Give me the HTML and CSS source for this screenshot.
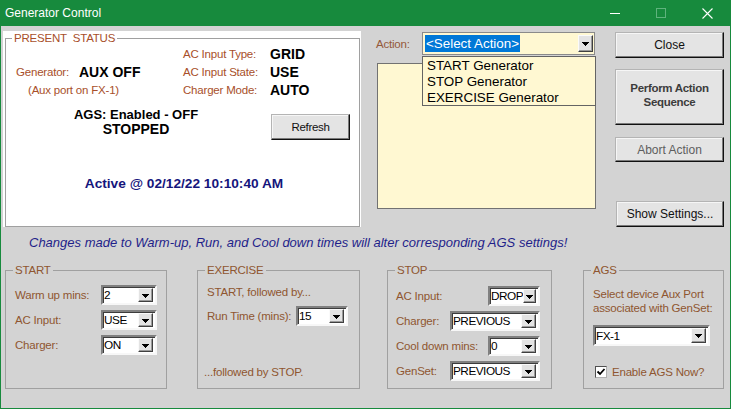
FILE: index.html
```html
<!DOCTYPE html>
<html>
<head>
<meta charset="utf-8">
<title>Generator Control</title>
<link rel="stylesheet" href="styles.css">
</head>
<body>
<div class="window">
  <header class="titlebar">
    <span class="title">Generator Control</span>
    <div class="wincontrols">
      <span class="wc"><svg width="10" height="10" viewBox="0 0 10 10"><path d="M0 5.5H10" stroke="#fff" stroke-width="1"/></svg></span>
      <span class="wc"><svg width="10" height="10" viewBox="0 0 10 10"><rect x="0.5" y="0.5" width="9" height="9" fill="none" stroke="#5fb37d" stroke-width="1"/></svg></span>
      <span class="wc"><svg width="11" height="11" viewBox="0 0 11 11"><path d="M0.5 0.5L10.5 10.5M10.5 0.5L0.5 10.5" stroke="#fff" stroke-width="1.1"/></svg></span>
    </div>
  </header>
  <main class="client">
    <section class="top">
      <div class="status-panel">
        <fieldset class="status-group">
          <legend>PRESENT  STATUS</legend>
          <div class="status-grid">
            <div class="cell-left"></div>
            <span class="slabel">AC Input Type:</span>
            <span class="sval">GRID</span>
            <div class="cell-left gen"><span class="slabel">Generator:</span><span class="sval">AUX OFF</span></div>
            <span class="slabel">AC Input State:</span>
            <span class="sval">USE</span>
            <div class="cell-left aux"><span class="slabel">(Aux port on FX-1)</span></div>
            <span class="slabel">Charger Mode:</span>
            <span class="sval">AUTO</span>
          </div>
          <div class="ags-row">
            <div class="ags-state">
              <div class="ags-line1">AGS: Enabled - OFF</div>
              <div class="ags-line2">STOPPED</div>
            </div>
            <button class="btn refresh">Refresh</button>
          </div>
          <div class="active">Active @ 02/12/22 10:10:40 AM</div>
        </fieldset>
      </div>
      <div class="action-col">
        <div class="action-row">
          <span class="action-label">Action:</span>
          <div class="action-combo">
            <span class="sel">&lt;Select Action&gt;</span>
            <span class="combo-btn abtn"><svg class="arrow" width="7" height="4" viewBox="0 0 7 4"><path d="M0 0h7v1H0zM1 1h5v1H1zM2 2h3v1H2zM3 3h1v1H3z"/></svg></span>
            <ul class="droplist">
              <li>START Generator</li>
              <li>STOP Generator</li>
              <li>EXERCISE Generator</li>
            </ul>
          </div>
        </div>
        <div class="action-box"></div>
      </div>
      <div class="btn-col">
        <button class="btn btn-close">Close</button>
        <button class="btn btn-perform">Perform Action<br>Sequence</button>
        <button class="btn btn-abort">Abort Action</button>
        <button class="btn btn-show">Show Settings...</button>
      </div>
    </section>
    <p class="note">Changes made to Warm-up, Run, and Cool down times will alter corresponding AGS settings!</p>
    <section class="groups">
      <fieldset class="group g-start">
        <legend>START</legend>
        <div class="gbody start-grid">
          <span class="glabel">Warm up mins:</span>
          <div class="combo w56"><span class="combo-text">2</span><span class="combo-btn"><svg class="arrow" width="7" height="4" viewBox="0 0 7 4"><path d="M0 0h7v1H0zM1 1h5v1H1zM2 2h3v1H2zM3 3h1v1H3z"/></svg></span></div>
          <span class="glabel">AC Input:</span>
          <div class="combo w56"><span class="combo-text">USE</span><span class="combo-btn"><svg class="arrow" width="7" height="4" viewBox="0 0 7 4"><path d="M0 0h7v1H0zM1 1h5v1H1zM2 2h3v1H2zM3 3h1v1H3z"/></svg></span></div>
          <span class="glabel">Charger:</span>
          <div class="combo w56"><span class="combo-text">ON</span><span class="combo-btn"><svg class="arrow" width="7" height="4" viewBox="0 0 7 4"><path d="M0 0h7v1H0zM1 1h5v1H1zM2 2h3v1H2zM3 3h1v1H3z"/></svg></span></div>
        </div>
      </fieldset>
      <fieldset class="group g-ex">
        <legend>EXERCISE</legend>
        <div class="gbody ex-body">
          <div class="ex-line1 glabel">START, followed by...</div>
          <div class="ex-run">
            <span class="glabel ex-run-label">Run Time (mins):</span>
            <div class="combo w52"><span class="combo-text">15</span><span class="combo-btn"><svg class="arrow" width="7" height="4" viewBox="0 0 7 4"><path d="M0 0h7v1H0zM1 1h5v1H1zM2 2h3v1H2zM3 3h1v1H3z"/></svg></span></div>
          </div>
          <div class="ex-end glabel">...followed by STOP.</div>
        </div>
      </fieldset>
      <fieldset class="group g-stop">
        <legend>STOP</legend>
        <div class="gbody stop-body">
          <div class="stop-row">
            <span class="glabel">AC Input:</span>
            <div class="combo w52"><span class="combo-text">DROP</span><span class="combo-btn"><svg class="arrow" width="7" height="4" viewBox="0 0 7 4"><path d="M0 0h7v1H0zM1 1h5v1H1zM2 2h3v1H2zM3 3h1v1H3z"/></svg></span></div>
          </div>
          <div class="stop-row">
            <span class="glabel">Charger:</span>
            <div class="combo w90"><span class="combo-text">PREVIOUS</span><span class="combo-btn"><svg class="arrow" width="7" height="4" viewBox="0 0 7 4"><path d="M0 0h7v1H0zM1 1h5v1H1zM2 2h3v1H2zM3 3h1v1H3z"/></svg></span></div>
          </div>
          <div class="stop-row">
            <span class="glabel">Cool down mins:</span>
            <div class="combo w52"><span class="combo-text">0</span><span class="combo-btn"><svg class="arrow" width="7" height="4" viewBox="0 0 7 4"><path d="M0 0h7v1H0zM1 1h5v1H1zM2 2h3v1H2zM3 3h1v1H3z"/></svg></span></div>
          </div>
          <div class="stop-row">
            <span class="glabel">GenSet:</span>
            <div class="combo w90"><span class="combo-text">PREVIOUS</span><span class="combo-btn"><svg class="arrow" width="7" height="4" viewBox="0 0 7 4"><path d="M0 0h7v1H0zM1 1h5v1H1zM2 2h3v1H2zM3 3h1v1H3z"/></svg></span></div>
          </div>
        </div>
      </fieldset>
      <fieldset class="group g-ags">
        <legend>AGS</legend>
        <div class="gbody ags-body">
          <div class="glabel ags-text">Select device Aux Port<br>associated with GenSet:</div>
          <div class="combo w117 h21"><span class="combo-text">FX-1</span><span class="combo-btn"><svg class="arrow" width="7" height="4" viewBox="0 0 7 4"><path d="M0 0h7v1H0zM1 1h5v1H1zM2 2h3v1H2zM3 3h1v1H3z"/></svg></span></div>
          <label class="check-row">
            <span class="checkbox"><svg width="10" height="10" viewBox="0 0 10 10"><path d="M1.5 4.5L4 7L8.5 2" fill="none" stroke="#000" stroke-width="1.8"/></svg></span>
            <span class="glabel">Enable AGS Now?</span>
          </label>
        </div>
      </fieldset>
    </section>
  </main>
</div>
</body>
</html>
```

FILE: styles.css
```css
* { box-sizing: border-box; }
html, body { margin: 0; padding: 0; }
body {
  width: 731px;
  height: 409px;
  overflow: hidden;
  background: #d3d3d3;
  font-family: "Liberation Sans", Arial, sans-serif;
  font-size: 11.5px;
  letter-spacing: -0.2px;
  color: #000;
}

/* buttons (base) */
.btn {
  font-family: inherit;
  font-size: 12px;
  letter-spacing: 0;
  color: #111;
  background: #e4e4e4;
  border: 1px solid;
  border-color: #b4b4b4 #101010 #101010 #b4b4b4;
  box-shadow: inset -1px -1px 0 #7a7a7a, inset 1px 1px 0 #f6f6f6;
  padding: 0;
  margin: 0;
}

.window {
  width: 731px;
  height: 409px;
  display: flex;
  flex-direction: column;
  border: 1px solid #178a3d;
  border-top: none;
  background: #d3d3d3;
}
.titlebar {
  height: 26px;
  flex: none;
  background: #178a3d;
  display: flex;
  align-items: center;
  padding-left: 4px;
  color: #fff;
}
.title { font-size: 12px; letter-spacing: 0; }
.wincontrols { margin-left: auto; display: flex; height: 100%; }
.wc { width: 46px; display: flex; align-items: center; justify-content: center; }

.client { flex: 1; display: flex; flex-direction: column; }
.top { display: flex; align-items: flex-start; }

/* present status */
.status-panel {
  margin: 5px 0 0 2px;
  width: 358px;
  height: 196px;
  background: #fff;
  padding: 0 1px 0 2px;
}
fieldset { margin: 0; padding: 0; min-width: 0; border: 1px solid #a0a0a0; }
legend { padding: 0 2px; line-height: 14px; white-space: pre; }
.status-group { height: 196px; }
.status-group legend { margin-left: 6px; color: #a84f2a; }
.status-grid {
  display: grid;
  grid-template-columns: 177px 87px 1fr;
  grid-auto-rows: 18px;
  align-items: center;
}
.slabel { color: #a84f2a; }
.sval { font-weight: bold; font-size: 14px; letter-spacing: 0; }
.gen { display: flex; align-items: center; padding-left: 10px; }
.gen .slabel { width: 63px; }
.aux { padding-left: 22px; }
.ags-row { display: flex; align-items: flex-start; margin-top: 8px; }
.ags-state {
  width: 260px;
  text-align: center;
  font-weight: bold;
  letter-spacing: 0;
  line-height: 15px;
}
.ags-line1 { font-size: 13px; }
.ags-line2 { font-size: 14px; }
.ags-row .refresh { margin: 7px 0 0 5px; width: 79px; height: 26px; font-size: 11.5px; letter-spacing: -0.3px; }
.active {
  margin-top: 36px;
  padding-left: 3px;
  text-align: center;
  font-weight: bold;
  font-size: 13.7px;
  letter-spacing: 0;
  line-height: 16px;
  color: #15157c;
}

/* action */
.action-col { margin: 6px 0 0 15px; width: 220px; }
.action-row { display: flex; align-items: center; }
.action-label { width: 46px; color: #94593a; }
.action-combo {
  position: relative;
  width: 173px;
  height: 23px;
  background: #fff8d2;
  border: 1px solid #8a8a8a;
  display: flex;
  align-items: center;
  padding-left: 2px;
}
.sel {
  background: #0078d7;
  color: #fff;
  font-size: 13.4px;
  line-height: 17px;
  padding: 0 1px;
  letter-spacing: 0;
}
.droplist {
  position: absolute;
  top: 23px;
  left: -1px;
  width: 174px;
  height: 50px;
  margin: 0;
  list-style: none;
  border: 1px solid #646464;
  background: #fff8d2;
  padding: 1px 0 0 4px;
  font-size: 13.4px;
  line-height: 16px;
  letter-spacing: 0;
  z-index: 2;
}
.action-box {
  margin: 8px 0 0 1px;
  width: 219px;
  height: 146px;
  background: #fff8d2;
  border: 1px solid #727272;
}

.btn-col { margin: 6px 0 0 19px; width: 109px; display: flex; flex-direction: column; }
.btn-close { height: 26px; }
.btn-perform {
  margin-top: 11px;
  height: 56px;
  font-weight: bold;
  color: #3c3c3c;
  font-size: 11.5px;
  line-height: 14px;
  padding-bottom: 4px;
  letter-spacing: -0.3px;
}
.btn-abort { margin-top: 12px; height: 25px; color: #5e5e5e; }
.btn-show { margin-top: 39px; margin-left: 1px; width: 108px; height: 26px; }

.note {
  margin: 8px 0 0 28px;
  font-style: italic;
  font-size: 13px;
  line-height: 16px;
  color: #1f1f8a;
  letter-spacing: 0;
}

/* groups */
.groups { display: flex; align-items: flex-start; margin: 12px 0 0 4px; }
.group { height: 126px; }
.group legend { margin-left: 7px; color: #8f5630; }
.glabel { color: #8f5630; }
.g-start { width: 162px; }
.g-ex { width: 163px; margin-left: 30px; }
.g-stop { width: 165px; margin-left: 27px; }
.g-ags { width: 141px; margin-left: 31px; }

.start-grid {
  padding: 8px 0 0 9px;
  display: grid;
  grid-template-columns: 86px 56px;
  grid-auto-rows: 20px;
  row-gap: 5px;
  align-items: center;
}
.ex-body { padding-left: 9px; }
.ex-line1 { margin-top: 8px; line-height: 14px; }
.ex-run { display: flex; align-items: center; margin-top: 7px; }
.ex-run-label { width: 89px; }
.ex-end { margin: 39px 0 0 -3px; line-height: 14px; }

.stop-body { padding: 9px 11px 0 8px; display: flex; flex-direction: column; gap: 5px; }
.stop-row { display: flex; align-items: center; height: 20px; }
.stop-row .combo { margin-left: auto; }

.ags-body { padding: 10px 0 0 9px; }
.ags-text { line-height: 14px; }
.ags-body .combo { margin-top: 10px; }
.check-row { display: flex; align-items: center; margin-top: 19px; height: 14px; }
.checkbox {
  width: 12px;
  height: 12px;
  margin: 0 5px 0 2px;
  background: #fff;
  border: 1px solid;
  border-color: #505050 #b0b0b0 #b0b0b0 #505050;
  display: flex;
  align-items: center;
  justify-content: center;
}

/* combo boxes */
.combo {
  display: flex;
  align-items: center;
  height: 20px;
  background: #fff;
  border: 2px solid;
  border-color: #808080 #f7f7f7 #f7f7f7 #808080;
  box-shadow: inset 1px 1px 0 #3c3c3c;
  font-size: 11.8px;
  letter-spacing: -0.5px;
  color: #000;
}
.w52 { width: 52px; }
.w56 { width: 56px; }
.w90 { width: 90px; }
.w117 { width: 117px; }
.h21 { height: 21px; }
.combo-text { padding-left: 1px; }
.combo-btn {
  margin-left: auto;
  margin-right: 2px;
  width: 15px;
  height: 14px;
  background: #e3e3e3;
  border: 1px solid;
  border-color: #fafafa #3f3f3f #3f3f3f #fafafa;
  box-shadow: inset -1px -1px 0 #9a9a9a;
  display: flex;
  align-items: center;
  justify-content: center;
}
.h21 .combo-btn { height: 15px; }
.action-combo .abtn { margin-right: 1px; height: 17px; }
.arrow { display: block; fill: #000; margin-top: 1px; }
```
